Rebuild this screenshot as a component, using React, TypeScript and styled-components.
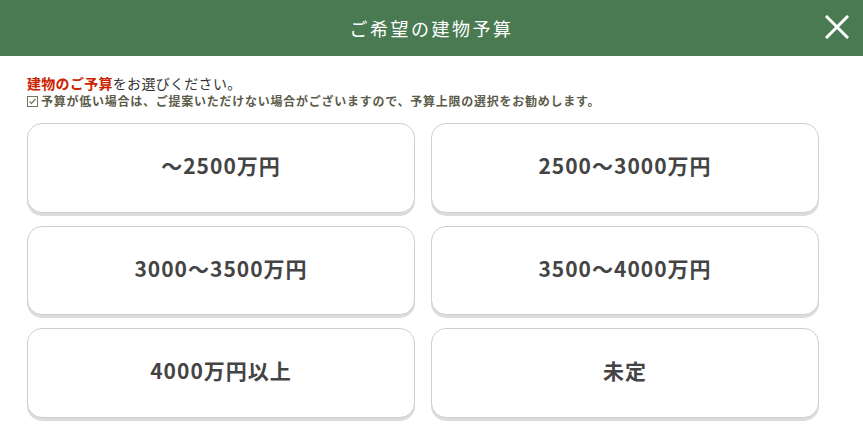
import React from "react";
import styled, { createGlobalStyle } from "styled-components";

const Global = createGlobalStyle`
  html, body { margin: 0; padding: 0; background: #fff; }
  body { font-family: "Noto Sans CJK JP", "Noto Sans", sans-serif; }
`;

const Page = styled.div`
  width: 863px;
  height: 448px;
  background: #fff;
  display: flex;
  flex-direction: column;
`;

const Header = styled.header`
  height: 56px;
  background: #4a7a52;
  display: flex;
  align-items: center;
  justify-content: center;
  position: relative;
`;

const Title = styled.h1`
  margin: 0;
  color: #fff;
  font-size: 18px;
  font-weight: 400;
  letter-spacing: 2.5px;
`;

const Close = styled.button`
  position: absolute;
  right: 14px;
  top: 15px;
  width: 24px;
  height: 24px;
  padding: 0;
  border: 0;
  background: transparent;
  cursor: pointer;
  display: flex;
`;

const Body = styled.main`
  padding: 18px 44px 0 27px;
  display: flex;
  flex-direction: column;
`;

const Lead = styled.p`
  margin: 0;
  font-size: 14px;
  line-height: 18px;
  color: #333;
  letter-spacing: 0.3px;
`;

const Em = styled.span`
  color: #cc2200;
  font-weight: 700;
`;

const Note = styled.p`
  margin: 0;
  font-size: 12px;
  line-height: 18px;
  color: #5c5c4a;
  font-weight: 700;
  letter-spacing: 0.75px;
  display: flex;
  align-items: center;
  gap: 3px;
`;

const Grid = styled.div`
  margin-top: 13px;
  display: grid;
  grid-template-columns: 388px 388px;
  column-gap: 16px;
  row-gap: 13px;
`;

const Choice = styled.button`
  height: 89.5px;
  box-sizing: border-box;
  background: #fff;
  border: 1px solid #cfcfcf;
  border-radius: 15px;
  box-shadow: 0 3px 0 #dcdcdc;
  font-family: "Noto Sans CJK JP", "Noto Sans", sans-serif;
  font-size: 21px;
  font-weight: 700;
  letter-spacing: 1px;
  color: #444;
  cursor: pointer;
  padding: 0 0 5px;
`;

const options = [
  "〜2500万円",
  "2500〜3000万円",
  "3000〜3500万円",
  "3500〜4000万円",
  "4000万円以上",
  "未定",
];

export default function App() {
  return (
    <Page>
      <Global />
      <Header>
        <Title>ご希望の建物予算</Title>
        <Close aria-label="閉じる">
          <svg width="24" height="24" viewBox="0 0 24 24">
            <path d="M2 2 L22 22 M22 2 L2 22" stroke="#fff" strokeWidth="3" strokeLinecap="square" />
          </svg>
        </Close>
      </Header>
      <Body>
        <Lead>
          <Em>建物のご予算</Em>をお選びください。
        </Lead>
        <Note>
          <svg width="11" height="11" viewBox="0 0 11 11">
            <rect x="0.5" y="0.5" width="10" height="10" fill="none" stroke="#6a7a5a" />
            <path d="M2.5 5.5 L4.5 7.5 L8.5 3" fill="none" stroke="#6a7a5a" strokeWidth="1.2" />
          </svg>
          予算が低い場合は、ご提案いただけない場合がございますので、予算上限の選択をお勧めします。
        </Note>
        <Grid>
          {options.map((o) => (
            <Choice key={o}>{o}</Choice>
          ))}
        </Grid>
      </Body>
    </Page>
  );
}
